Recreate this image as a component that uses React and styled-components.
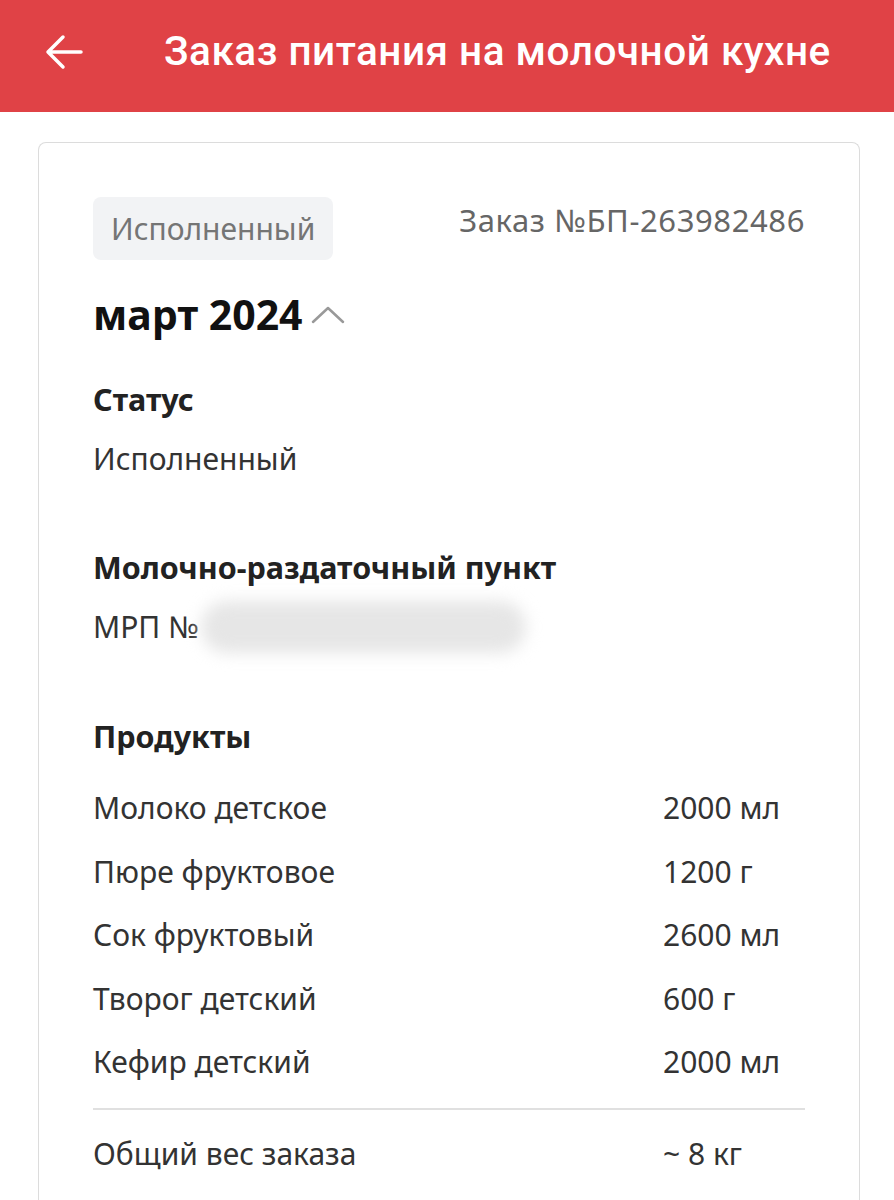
import React from 'react'
import styled, { createGlobalStyle } from 'styled-components'

const GlobalStyle = createGlobalStyle`
  html, body {
    margin: 0;
    padding: 0;
    background: #fff;
  }
  body {
    font-family: "Noto Sans", "Open Sans", sans-serif;
    color: #222;
  }
`

const Header = styled.header`
  height: 112px;
  background-color: #e04246;
  display: flex;
  align-items: center;
  padding: 0 0 0 44px;
  box-sizing: border-box;
`

const BackButton = styled.button`
  width: 40px;
  height: 40px;
  padding: 0;
  border: none;
  background: transparent;
  display: flex;
  align-items: center;
  justify-content: center;
  margin-right: 80px;
  margin-top: -8px;
`

const Title = styled.h1`
  margin: 0 0 10px 0;
  font-family: Roboto, "Noto Sans", sans-serif;
  font-weight: 500;
  font-size: 40.5px;
  color: #fff;
  letter-spacing: 0.5px;
  white-space: nowrap;
`

const Page = styled.main`
  padding: 30px 34px 0 38px;
`

const Card = styled.section`
  border: 1.5px solid #dcdcdc;
  border-bottom: none;
  border-radius: 8px 8px 0 0;
  padding: 54px 54px 40px 54px;
  min-height: 1100px;
  box-sizing: border-box;
`

const TopRow = styled.div`
  display: flex;
  justify-content: space-between;
  align-items: flex-start;
`

const Badge = styled.span`
  display: inline-block;
  background: #f2f3f5;
  border-radius: 8px;
  padding: 10px 18px;
  font-size: 30px;
  color: #757575;
  line-height: 43px;
`

const OrderNo = styled.span`
  font-size: 31px;
  color: #666;
  line-height: 43px;
  margin-top: 2px;
  letter-spacing: 0.6px;
`

const Month = styled.div`
  display: flex;
  align-items: center;
  gap: 8px;
  margin-top: 26px;
  font-size: 41px;
  font-weight: 700;
  color: #111;
  line-height: 56px;
`

const Section = styled.div`
  margin-top: ${p => p.$top}px;
`

const Label = styled.div`
  font-size: 30.5px;
  font-weight: 700;
  color: #222;
  line-height: 40px;
`

const Value = styled.div`
  font-size: 30px;
  color: #333;
  line-height: 40px;
  height: 40px;
  margin-top: 20px;
  display: flex;
  align-items: center;
`

const Blur = styled.span`
  display: inline-block;
  width: 325px;
  height: 52px;
  margin-left: 2px;
  border-radius: 26px;
  background: #e6e6e6;
  filter: blur(8px);
`

const Products = styled.div`
  margin-top: ${p => p.$top || 0}px;
  display: grid;
  grid-template-columns: 570px 1fr;
  row-gap: 23.5px;
`

const Cell = styled.span`
  font-size: 30px;
  color: #333;
  line-height: 40px;
`

const Divider = styled.hr`
  border: none;
  height: 2px;
  background: #e0e0e0;
  margin: 26px 0 24px 0;
`

const products = [
  ['Молоко детское', '2000 мл'],
  ['Пюре фруктовое', '1200 г'],
  ['Сок фруктовый', '2600 мл'],
  ['Творог детский', '600 г'],
  ['Кефир детский', '2000 мл'],
]

function ArrowLeft() {
  return (
    <svg width="40" height="40" viewBox="0 0 40 40" fill="none">
      <path d="M37 20H4M19 5L4 20L19 35" stroke="#fff" strokeWidth="3.5" strokeLinecap="round" strokeLinejoin="round" />
    </svg>
  )
}

function ChevronUp() {
  return (
    <svg width="34" height="22" viewBox="0 0 34 22" fill="none">
      <path d="M2 19L17 5L32 19" stroke="#999" strokeWidth="2.5" strokeLinecap="round" strokeLinejoin="round" />
    </svg>
  )
}

export default function App() {
  return (
    <>
      <GlobalStyle />
      <Header>
        <BackButton aria-label="Назад">
          <ArrowLeft />
        </BackButton>
        <Title>Заказ питания на молочной кухне</Title>
      </Header>
      <Page>
        <Card>
          <TopRow>
            <Badge>Исполненный</Badge>
            <OrderNo>Заказ №БП-263982486</OrderNo>
          </TopRow>
          <Month>
            март 2024
            <ChevronUp />
          </Month>

          <Section $top={37}>
            <Label>Статус</Label>
            <Value>Исполненный</Value>
          </Section>

          <Section $top={68}>
            <Label>Молочно-раздаточный пункт</Label>
            <Value>
              МРП №
              <Blur />
            </Value>
          </Section>

          <Section $top={69}>
            <Label>Продукты</Label>
            <Products $top={32}>
              {products.map(([name, qty]) => (
                <React.Fragment key={name}>
                  <Cell>{name}</Cell>
                  <Cell>{qty}</Cell>
                </React.Fragment>
              ))}
            </Products>
            <Divider />
            <Products>
              <Cell>Общий вес заказа</Cell>
              <Cell>~ 8 кг</Cell>
            </Products>
          </Section>
        </Card>
      </Page>
    </>
  )
}
